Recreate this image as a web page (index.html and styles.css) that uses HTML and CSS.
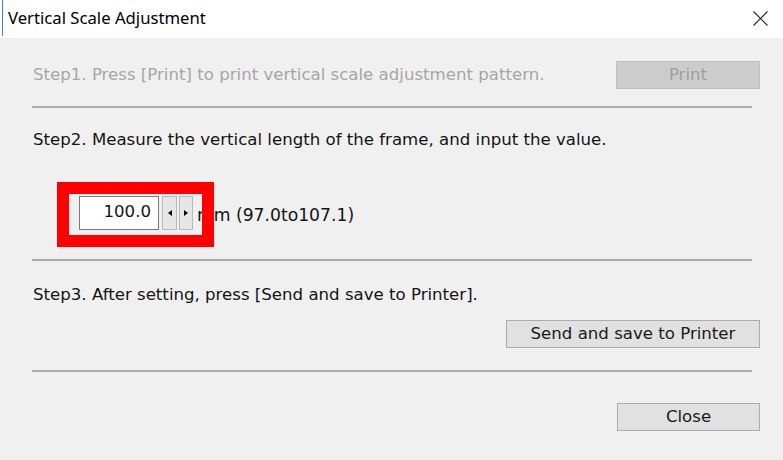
FILE: index.html
```html
<!DOCTYPE html>
<html lang="en">
<head>
<meta charset="utf-8">
<title>Vertical Scale Adjustment</title>
<link rel="stylesheet" href="styles.css">
</head>
<body>
<div class="window">
  <div class="titlebar">
    <div class="title">Vertical Scale Adjustment</div>
    <div class="close-x">
      <svg width="15" height="15" viewBox="0 0 15 15"><path d="M0.5 0.5 L14.5 14.5 M14.5 0.5 L0.5 14.5" stroke="#222" stroke-width="1.1" fill="none"/></svg>
    </div>
  </div>
  <div class="content">
    <div class="row row-step1">
      <span class="step disabled">Step1. Press [Print] to print vertical scale adjustment pattern.</span>
      <button class="btn btn-print" disabled>Print</button>
    </div>
    <div class="sep sep1"></div>
    <p class="step step2">Step2. Measure the vertical length of the frame, and input the value.</p>
    <div class="spin-row">
      <div class="spin-group">
        <div class="spin-input">100.0</div>
        <div class="spin-btn"><span class="tri tri-left"></span></div>
        <div class="spin-btn spin-btn-r"><span class="tri tri-right"></span></div>
        <div class="highlight"></div>
      </div>
      <span class="unit">mm (97.0to107.1)</span>
    </div>
    <div class="sep sep2"></div>
    <p class="step step3">Step3. After setting, press [Send and save to Printer].</p>
    <div class="row row-right row-send">
      <button class="btn btn-send">Send and save to Printer</button>
    </div>
    <div class="sep sep3"></div>
    <div class="row row-right row-close">
      <button class="btn btn-close">Close</button>
    </div>
  </div>
</div>
</body>
</html>
```

FILE: styles.css
```css
html, body {
  margin: 0;
  padding: 0;
}
body {
  width: 783px;
  height: 460px;
  overflow: hidden;
  background: #f0f0f0;
}
.window {
  width: 783px;
  height: 460px;
  display: flex;
  flex-direction: column;
}
.titlebar {
  height: 38px;
  background: #ffffff;
  display: flex;
  justify-content: space-between;
  box-sizing: border-box;
  padding-left: 2px;
}
.title {
  flex: 1;
  height: 36px;
  border-left: 1px solid #3a86cc;
  box-sizing: border-box;
  padding-left: 5px;
  padding-top: 7px;
  font-family: "Noto Sans", "Open Sans", sans-serif;
  font-size: 16.7px;
  line-height: 22px;
  color: #000;
}
.close-x {
  margin-top: 11px;
  margin-right: 15px;
  width: 15px;
  height: 15px;
}
.close-x svg {
  display: block;
}
.content {
  flex: 1;
  background: #f0f0f0;
  padding: 23px 23px 0 32px;
  font-family: "DejaVu Sans", Verdana, sans-serif;
  font-size: 16.6px;
  color: #141414;
}
.row {
  display: flex;
  align-items: center;
  height: 28px;
}
.row-step1 {
  justify-content: space-between;
}
.row-right {
  justify-content: flex-end;
}
.step {
  margin: 0;
  padding-left: 1px;
  line-height: 20px;
}
.disabled {
  color: #a6a6a6;
}
.btn {
  font-family: "DejaVu Sans", Verdana, sans-serif;
  font-size: 16.6px;
  height: 28px;
  box-sizing: border-box;
  border: 1px solid #adadad;
  background: #e1e1e1;
  color: #1a1a1a;
  padding: 0;
  margin: 0;
  line-height: 26px;
}
.btn-print {
  width: 144px;
  background: #cccccc;
  border-color: #bfbfbf;
  color: #a0a0a0;
}
.btn-send {
  width: 254px;
}
.btn-close {
  width: 143px;
}
.sep {
  height: 2px;
  background: #ababab;
  margin-right: 8px;
}
.sep1 {
  margin-top: 17px;
}
.step2 {
  margin-top: 22px;
}
.spin-row {
  display: flex;
  align-items: center;
  margin-top: 46px;
  height: 34px;
}
.spin-group {
  position: relative;
  display: flex;
  margin-left: 47px;
  height: 34px;
}
.spin-input {
  width: 80px;
  height: 34px;
  box-sizing: border-box;
  border: 1px solid #7a7a7a;
  background: #ffffff;
  text-align: right;
  padding-right: 7px;
  line-height: 30px;
  color: #141414;
}
.spin-btn {
  width: 15px;
  height: 34px;
  box-sizing: border-box;
  margin-left: 3px;
  border: 1px solid #b9b9b9;
  background: #e6e6e6;
  display: flex;
  align-items: center;
  justify-content: center;
}
.spin-btn-r {
  margin-left: 2px;
  width: 14px;
}
.tri {
  width: 0;
  height: 0;
  border-top: 3.5px solid transparent;
  border-bottom: 3.5px solid transparent;
}
.tri-left {
  border-right: 4px solid #000;
}
.tri-right {
  border-left: 4px solid #000;
}
.highlight {
  position: absolute;
  left: -22px;
  top: -14px;
  width: 157px;
  height: 65px;
  box-sizing: border-box;
  border: 12px solid #ff0000;
}
.unit {
  margin-left: 4px;
  margin-top: 4px;
  line-height: 20px;
  font-size: 17.2px;
}
.sep2 {
  margin-top: 29px;
}
.step3 {
  margin-top: 24px;
}
.row-send {
  margin-top: 15px;
}
.sep3 {
  margin-top: 22px;
}
.row-close {
  margin-top: 31px;
}
```
